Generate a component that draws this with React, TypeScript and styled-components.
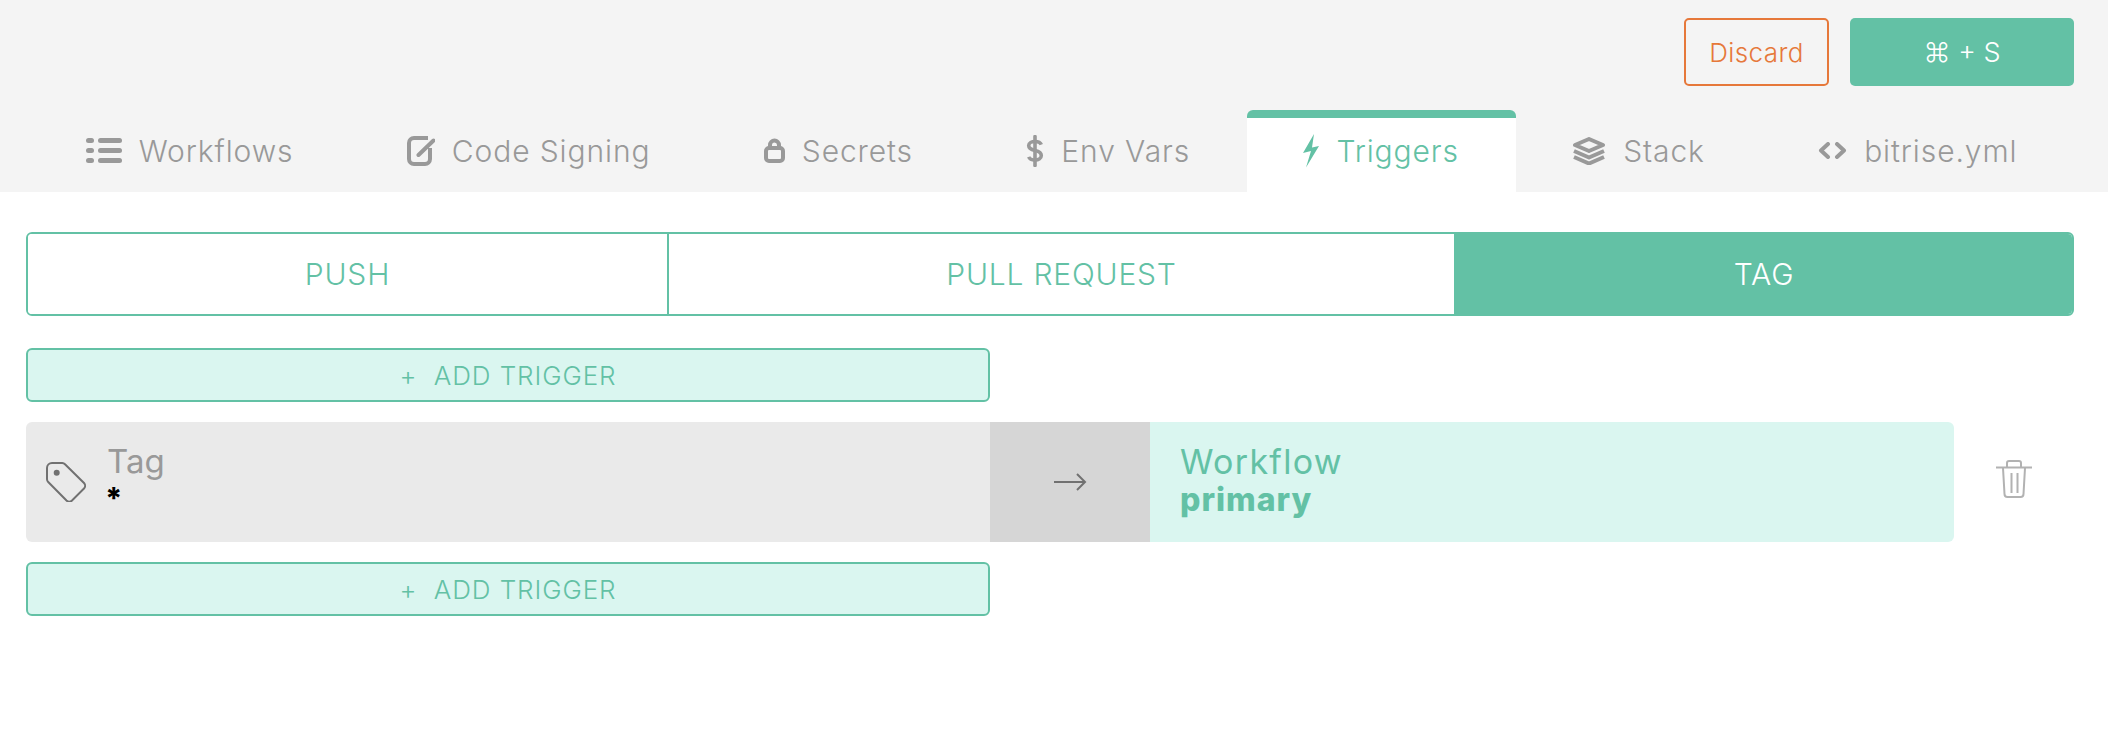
import { createGlobalStyle } from "styled-components";
import styled from "styled-components";
import type { ReactNode } from "react";

const green = "#63c1a5";
const mint = "#daf6f0";
const muted = "#999999";

const GlobalStyle = createGlobalStyle`
  html, body {
    margin: 0;
    background: #fff;
    font-family: Inter, "Noto Sans", sans-serif;
  }
`;

const Header = styled.header`
  background: #f4f4f4;
  height: 192px;
  padding: 18px 34px 0 26px;
  box-sizing: border-box;
  display: flex;
  flex-direction: column;
`;

const Actions = styled.div`
  display: flex;
  justify-content: flex-end;
  gap: 21px;
  height: 68px;
`;

const DiscardButton = styled.button`
  width: 145px;
  background: transparent;
  border: 2px solid #e6783a;
  border-radius: 5px;
  color: #e6783a;
  font: 300 26px Inter, sans-serif;
  letter-spacing: 0.4px;
`;

const SaveButton = styled.button`
  width: 224px;
  background: ${green};
  border: 0;
  border-radius: 5px;
  color: #fff;
  font: 300 27px Inter, "DejaVu Sans", sans-serif;
`;

const Tabs = styled.nav`
  display: flex;
  margin: 24px 0 0 3px;
  height: 82px;
`;

const Tab = styled.div<{ $active?: boolean }>`
  flex: 1 1 auto;
  display: flex;
  align-items: center;
  justify-content: center;
  gap: 17px;
  padding: 0 40px 9px;
  box-sizing: border-box;
  font-size: 30px;
  font-weight: 300;
  letter-spacing: 0.9px;
  white-space: nowrap;
  color: ${({ $active }) => ($active ? green : muted)};
  background: ${({ $active }) => ($active ? "#fff" : "transparent")};
  border-top: 8px solid ${({ $active }) => ($active ? green : "transparent")};
  border-radius: 6px 6px 0 0;
`;

const Main = styled.main`
  padding: 40px 34px 0 26px;
  display: flex;
  flex-direction: column;
`;

const Segments = styled.div`
  display: grid;
  grid-template-columns: 639px 787px 1fr;
  height: 84px;
  border: 2px solid ${green};
  border-radius: 6px;
  box-sizing: border-box;
  overflow: hidden;
`;

const Segment = styled.div<{ $active?: boolean }>`
  display: flex;
  align-items: center;
  justify-content: center;
  font-size: 30px;
  font-weight: 300;
  letter-spacing: 0.8px;
  color: ${({ $active }) => ($active ? "#fff" : green)};
  background: ${({ $active }) => ($active ? green : "#fff")};
  & + & {
    border-left: 2px solid ${green};
  }
`;

const AddTrigger = styled.button`
  width: 964px;
  height: 54px;
  box-sizing: border-box;
  background: ${mint};
  border: 2px solid ${green};
  border-radius: 6px;
  color: ${green};
  font: 300 26px Inter, sans-serif;
  letter-spacing: 0.9px;
`;

const FirstAdd = styled(AddTrigger)`
  margin-top: 32px;
`;

const RowWrap = styled.div`
  display: flex;
  align-items: flex-start;
  margin: 20px 0;
`;

const TriggerRow = styled.div`
  width: 1928px;
  height: 120px;
  display: flex;
  border-radius: 6px;
  overflow: hidden;
`;

const Pattern = styled.div`
  width: 964px;
  background: #eaeaea;
  display: flex;
  align-items: flex-start;
  padding: 21px 0 0 20px;
  box-sizing: border-box;
`;

const TagIconSlot = styled.div`
  margin-top: 19px;
`;

const PatternText = styled.div`
  margin-left: 21px;
  display: flex;
  flex-direction: column;
`;

const Label = styled.div`
  font-size: 33px;
  line-height: 36px;
  font-weight: 400;
  color: ${muted};
`;

const Wildcard = styled.div`
  font-size: 30px;
  line-height: 32px;
  font-weight: 800;
  color: #000;
  margin: 3px 0 0 -2px;
`;

const ArrowBox = styled.div`
  width: 160px;
  background: #d6d6d6;
  display: flex;
  align-items: center;
  justify-content: center;
`;

const Target = styled.div`
  flex: 1;
  background: ${mint};
  padding: 21px 30px 0;
  box-sizing: border-box;
  color: ${green};
`;

const TargetName = styled.div`
  font-size: 34px;
  line-height: 38px;
  font-weight: 400;
  letter-spacing: 1.3px;
`;

const TargetValue = styled.div`
  font-size: 32px;
  line-height: 38px;
  font-weight: 800;
  letter-spacing: 1px;
`;

const DeleteSlot = styled.div`
  flex: 1;
  display: flex;
  justify-content: center;
  padding-top: 38px;
`;

const IconSvg = styled.svg`
  display: block;
  flex: none;
`;

function Icon({ w, h, box, children }: { w: number; h: number; box?: string; children: ReactNode }) {
  return (
    <IconSvg width={w} height={h} viewBox={box ?? `0 0 ${w} ${h}`} fill="none">
      {children}
    </IconSvg>
  );
}

const tabs: { label: string; icon: ReactNode; active?: boolean }[] = [
  {
    label: "Workflows",
    icon: (
      <Icon w={36} h={25}>
        <g fill={muted}>
          <rect x="0" y="0" width="8" height="5" rx="2.500" />
          <rect x="0" y="10" width="8" height="5" rx="2.500" />
          <rect x="0" y="20" width="8" height="5" rx="2.500" />
          <rect x="12" y="0" width="24" height="5" rx="2.500" />
          <rect x="12" y="10" width="24" height="5" rx="2.500" />
          <rect x="12" y="20" width="24" height="5" rx="2.500" />
        </g>
      </Icon>
    ),
  },
  {
    label: "Code Signing",
    icon: (
      <Icon w={28} h={30}>
        <path d="M21 2H7a5 5 0 0 0-5 5v16a5 5 0 0 0 5 5h11a5 5 0 0 0 5-5V12" stroke={muted} strokeWidth="4" />
        <path d="M11.500 19 26.500 4.500" stroke={muted} strokeWidth="4" strokeLinecap="round" />
      </Icon>
    ),
  },
  {
    label: "Secrets",
    icon: (
      <Icon w={21} h={25}>
        <path d="M6 10V7a4.500 4.500 0 0 1 9 0v3" stroke={muted} strokeWidth="4" />
        <rect x="2" y="10" width="17" height="13" rx="3" stroke={muted} strokeWidth="4" />
      </Icon>
    ),
  },
  {
    label: "Env Vars",
    icon: (
      <Icon w={18} h={32} box="0 0 20 34">
        <path d="M10 1v32" stroke={muted} strokeWidth="4" strokeLinecap="round" />
        <path d="M17 10c-1-2.500-3.500-3.500-7-3.500S3 8 3 11c0 3 2.500 4.500 7 5.500s7 2.500 7 5.500-3 5-7 5-6-1-7-3.500" stroke={muted} strokeWidth="4" />
      </Icon>
    ),
  },
  {
    label: "Triggers",
    active: true,
    icon: (
      <Icon w={16} h={34}>
        <path d="M11 0 0 19 8 17 3 33.500 16 12 9 13.500z" fill={green} />
      </Icon>
    ),
  },
  {
    label: "Stack",
    icon: (
      <Icon w={34} h={28}>
        <path d="M17 2 31 8 17 14 3 8z" stroke={muted} strokeWidth="4" strokeLinejoin="round" />
        <path d="M2 14 17 20.500 32 14M2 20 17 26.500 32 20" stroke={muted} strokeWidth="4" strokeLinejoin="round" />
      </Icon>
    ),
  },
  {
    label: "bitrise.yml",
    icon: (
      <Icon w={29} h={17}>
        <path d="M10 2 3 8.500l7 6.500M19 2l7 6.500-7 6.500" stroke={muted} strokeWidth="4" strokeLinecap="round" strokeLinejoin="round" />
      </Icon>
    ),
  },
];

export default function App() {
  return (
    <>
      <GlobalStyle />
      <Header>
        <Actions>
          <DiscardButton>Discard</DiscardButton>
          <SaveButton>⌘ + S</SaveButton>
        </Actions>
        <Tabs>
          {tabs.map((tab) => (
            <Tab key={tab.label} $active={tab.active}>
              {tab.icon}
              <span>{tab.label}</span>
            </Tab>
          ))}
        </Tabs>
      </Header>
      <Main>
        <Segments>
          <Segment>PUSH</Segment>
          <Segment>PULL REQUEST</Segment>
          <Segment $active>TAG</Segment>
        </Segments>
        <FirstAdd>+&nbsp;&nbsp;ADD TRIGGER</FirstAdd>
        <RowWrap>
          <TriggerRow>
            <Pattern>
              <TagIconSlot>
                <Icon w={40} h={40}>
                  <path
                    d="M1 6a5 5 0 0 1 5-5h10a4 4 0 0 1 3 1.200L38 21a4 4 0 0 1 0 5.500L26 38.500a4 4 0 0 1-5.500 0L2.200 20A4 4 0 0 1 1 17z"
                    stroke="#717171"
                    strokeWidth="2"
                  />
                  <circle cx="10.700" cy="10.700" r="3" fill="#717171" />
                </Icon>
              </TagIconSlot>
              <PatternText>
                <Label>Tag</Label>
                <Wildcard>*</Wildcard>
              </PatternText>
            </Pattern>
            <ArrowBox>
              <Icon w={33} h={18}>
                <path d="M0 9h31M23 1l8 8-8 8" stroke="#717171" strokeWidth="2" />
              </Icon>
            </ArrowBox>
            <Target>
              <TargetName>Workflow</TargetName>
              <TargetValue>primary</TargetValue>
            </Target>
          </TriggerRow>
          <DeleteSlot>
            <Icon w={36} h={38}>
              <path d="M0 7.500h36" stroke="#b2b2b2" strokeWidth="2" />
              <path d="M11 7V3a2 2 0 0 1 2-2h10a2 2 0 0 1 2 2v4" stroke="#b2b2b2" strokeWidth="2" />
              <path d="M7 8l1.500 26a3 3 0 0 0 3 3h13a3 3 0 0 0 3-3L29 8" stroke="#b2b2b2" strokeWidth="2" />
              <path d="M15.500 13v20M21.500 13v20" stroke="#b2b2b2" strokeWidth="2" />
            </Icon>
          </DeleteSlot>
        </RowWrap>
        <AddTrigger>+&nbsp;&nbsp;ADD TRIGGER</AddTrigger>
      </Main>
    </>
  );
}
